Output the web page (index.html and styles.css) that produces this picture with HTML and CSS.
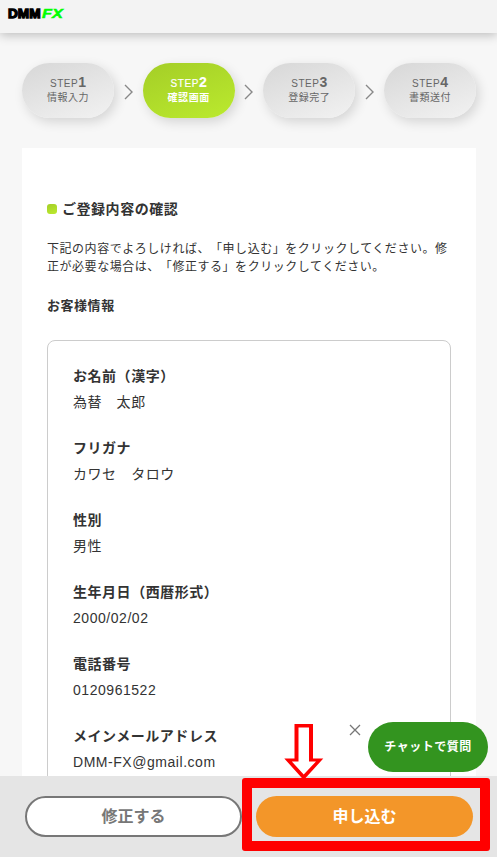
FILE: index.html
```html
<!DOCTYPE html>
<html lang="ja">
<head>
<meta charset="utf-8">
<title>DMM FX</title>
<link rel="stylesheet" href="styles.css">
</head>
<body>
<header class="header">
  <svg class="logo" width="60" height="14" viewBox="0 0 60 14" role="img" aria-label="DMM FX">
    <text class="logo-dmm" x="0" y="10.5" textLength="32.500" lengthAdjust="spacingAndGlyphs">DMM</text>
    <text class="logo-fx" x="34" y="10.5" textLength="21" lengthAdjust="spacingAndGlyphs">FX</text>
  </svg>
</header>
<main class="main">
  <div class="steps">
    <div class="step"><span class="step-no">STEP<b>1</b></span><span class="step-name">情報入力</span></div>
    <svg class="arrow" width="9" height="16" viewBox="0 0 9 16"><path d="M1 1l7 7L1 15"/></svg>
    <div class="step current"><span class="step-no">STEP<b>2</b></span><span class="step-name">確認画面</span></div>
    <svg class="arrow" width="9" height="16" viewBox="0 0 9 16"><path d="M1 1l7 7L1 15"/></svg>
    <div class="step"><span class="step-no">STEP<b>3</b></span><span class="step-name">登録完了</span></div>
    <svg class="arrow" width="9" height="16" viewBox="0 0 9 16"><path d="M1 1l7 7L1 15"/></svg>
    <div class="step"><span class="step-no">STEP<b>4</b></span><span class="step-name">書類送付</span></div>
  </div>
  <section class="card">
    <h1 class="title">ご登録内容の確認</h1>
    <p class="lead">下記の内容でよろしければ、「申し込む」をクリックしてください。修<br>正が必要な場合は、「修正する」をクリックしてください。</p>
    <h2 class="subtitle">お客様情報</h2>
    <dl class="info">
      <div class="item"><dt>お名前（漢字）</dt><dd>為替　太郎</dd></div>
      <div class="item"><dt>フリガナ</dt><dd>カワセ　タロウ</dd></div>
      <div class="item"><dt>性別</dt><dd>男性</dd></div>
      <div class="item"><dt>生年月日（西暦形式）</dt><dd>2000/02/02</dd></div>
      <div class="item"><dt>電話番号</dt><dd>0120961522</dd></div>
      <div class="item"><dt>メインメールアドレス</dt><dd>DMM-FX@gmail.com</dd></div>
    </dl>
  </section>
</main>
<footer class="footer">
  <button class="btn back">修正する</button>
  <button class="btn apply">申し込む</button>
</footer>
<div class="chat">
  <svg class="close" width="12" height="12" viewBox="0 0 12 12"><path d="M1 1l10 10M11 1L1 11"/></svg>
  <button class="chat-btn">チャットで質問</button>
</div>
<div class="highlight"></div>
<svg class="pointer" width="40" height="58" viewBox="0 0 40 58">
  <path class="pointer-edge" d="M10.500 2H29V36.500H39.300L19.700 58L.300 36.500H10.500Z"/>
  <path class="pointer-fill" d="M14.500 5.500H25V39.500H32L19.700 52.500L7.800 39.500H14.500Z"/>
</svg>
</body>
</html>
```
FILE: styles.css
```css
* { box-sizing: border-box; }

body {
  margin: 0;
  height: 857px;
  display: flex;
  flex-direction: column;
  overflow: hidden;
  position: relative;
  background: #f7f7f7;
  color: #333;
  font-family: "Liberation Sans", "Noto Sans CJK JP", sans-serif;
  letter-spacing: 0.54px;
  text-spacing-trim: space-all;
}

.header {
  flex: none;
  height: 33px;
  padding: 7px 8px;
  background: #f3f3f3;
  box-shadow: 0 2px 10px rgba(0, 0, 0, 0.25);
  z-index: 1;
}

.logo { display: block; overflow: visible; letter-spacing: 0; }
.logo text { font-family: "Liberation Sans", sans-serif; font-weight: bold; font-size: 13px; }
.logo-dmm { fill: #000; stroke: #000; stroke-width: 1.3; }
.logo-fx { fill: #0f0; stroke: #0f0; stroke-width: 0.5; font-style: italic; }

.main { flex: 1; min-height: 0; overflow: hidden; padding: 30px 21px 0 22px; }

.steps { display: flex; justify-content: space-between; align-items: center; height: 55px; }

.step {
  width: 92px;
  height: 55px;
  border-radius: 28px;
  display: flex;
  flex-direction: column;
  align-items: center;
  padding-top: 12px;
  color: #666;
  background: linear-gradient(160deg, #d7d7d7, #f2f2f2);
  box-shadow: 3px 4px 12px rgba(0, 0, 0, 0.14);
}

.step.current { color: #fff; background: linear-gradient(160deg, #a4ce27, #bbea2e); }
.step-no { font-size: 10px; line-height: 15px; height: 15px; white-space: nowrap; }
.step-no b { font-size: 14px; letter-spacing: 0; }
.step-name { font-size: 10px; line-height: 15px; }
.current .step-no { -webkit-text-stroke: 0.2px #fff; }
.current .step-name { font-weight: bold; }

.arrow { fill: none; stroke: #888; stroke-width: 1.4; position: relative; top: 1px; }

.card { margin-top: 30px; padding: 51px 25px 0; height: 800px; background: #fff; }

.title {
  display: flex;
  align-items: center;
  gap: 5px;
  margin: 0;
  font-size: 14px;
  line-height: 20px;
}

.title::before {
  content: "";
  width: 10px;
  height: 10px;
  border-radius: 3px;
  background: linear-gradient(160deg, #a4ce27, #bbea2e);
}

.lead { margin: 21px 0 0; font-size: 12px; line-height: 18px; white-space: nowrap; }
.subtitle { margin: 20px 0 0; font-size: 13px; line-height: 20px; }

.info {
  margin: 24px 0 0;
  height: 600px;
  padding: 22px 25px;
  border: 1px solid #ccc;
  border-radius: 8px;
  font-size: 14px;
  line-height: 26px;
}

.item { margin-bottom: 20px; }
.item dt { font-weight: bold; }
.item dd { margin: 0; }

.footer {
  flex: none;
  display: flex;
  gap: 14px;
  height: 81px;
  padding: 20px 24px 0 25px;
  background: #e5e5e5;
  z-index: 1;
}

.btn {
  flex: none;
  width: 217px;
  height: 41px;
  padding: 0;
  border: 0;
  border-radius: 21px;
  font: bold 16px/37px "Liberation Sans", "Noto Sans CJK JP", sans-serif;
}

.back { border: 2px solid #777; background: #fff; color: #777; }
.apply { background: #f39629; color: #fff; }

.chat {
  position: absolute;
  right: 9px;
  top: 722px;
  display: flex;
  gap: 7px;
  z-index: 2;
}

.close { margin-top: 2px; fill: none; stroke: #777; stroke-width: 1.3; }

.chat-btn {
  width: 120px;
  height: 50px;
  padding: 0;
  border: 0;
  border-radius: 25px;
  background: #33941f;
  color: #fff;
  font: bold 12px/50px "Liberation Sans", "Noto Sans CJK JP", sans-serif;
  letter-spacing: 0.5px;
}

.highlight {
  position: absolute;
  left: 242px;
  top: 778px;
  width: 248px;
  height: 73px;
  border: 10px solid #f00;
  border-radius: 3px;
  z-index: 3;
}

.pointer {
  position: absolute;
  left: 284px;
  top: 722px;
  z-index: 4;
}

.pointer-edge { fill: #f00; }
.pointer-fill { fill: #fff; }
```
